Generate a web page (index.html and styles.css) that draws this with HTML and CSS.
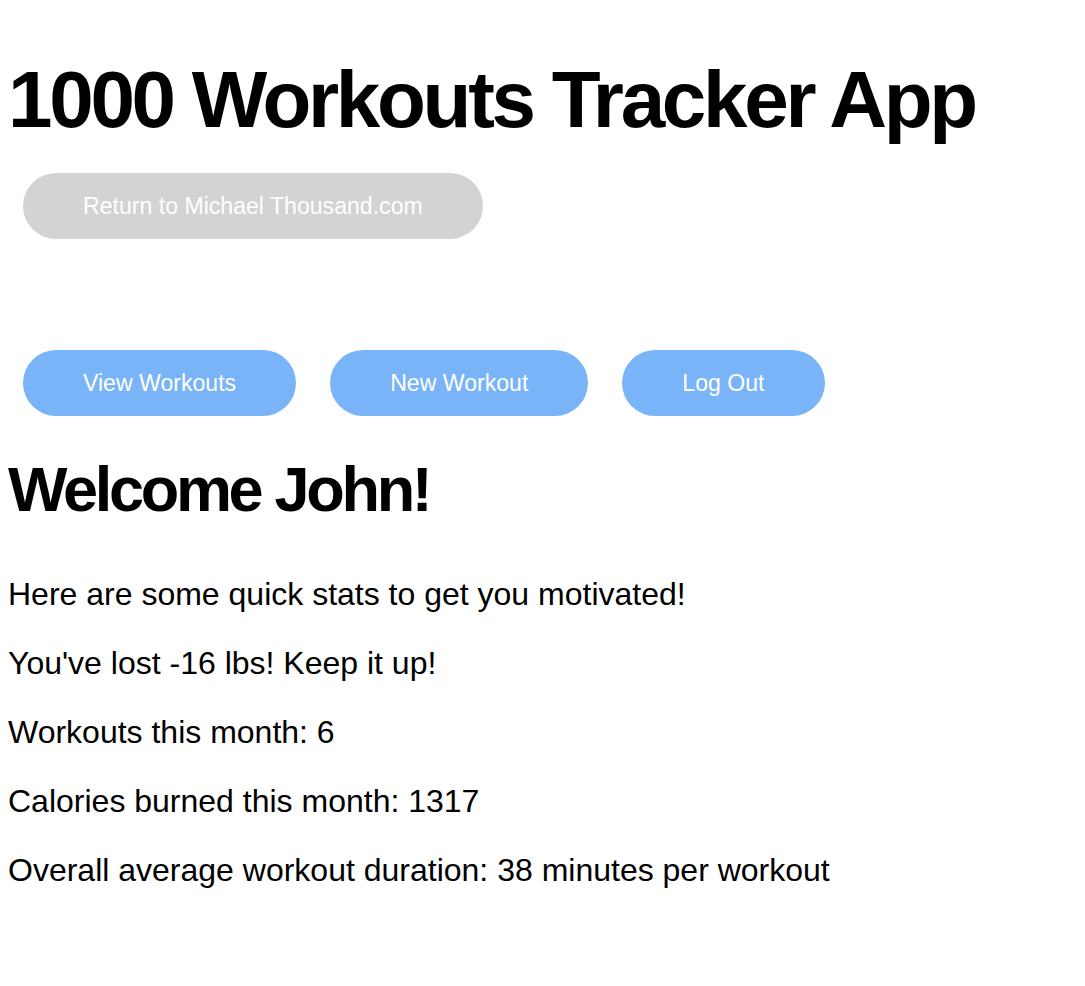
FILE: index.html
```html
<!DOCTYPE html>
<html>
<head>
<meta charset="utf-8">
<title>1000 Workouts Tracker App</title>
<link rel="stylesheet" href="styles.css">
</head>
<body>
<header class="header">
  <h1 class="title">1000 Workouts Tracker App</h1>
  <div class="return-row">
    <a class="btn btn-gray" href="#">Return to Michael Thousand.com</a>
  </div>
</header>
<nav class="nav">
  <a class="btn btn-blue" href="#">View Workouts</a>
  <a class="btn btn-blue" href="#">New Workout</a>
  <a class="btn btn-blue" href="#">Log Out</a>
</nav>
<main class="content">
  <h2 class="welcome">Welcome John!</h2>
  <div class="stats">
    <p class="stat">Here are some quick stats to get you motivated!</p>
    <p class="stat">You've lost -16 lbs! Keep it up!</p>
    <p class="stat">Workouts this month: 6</p>
    <p class="stat">Calories burned this month: 1317</p>
    <p class="stat">Overall average workout duration: 38 minutes per workout</p>
  </div>
</main>
</body>
</html>
```
FILE: styles.css
```css
body {
  margin: 8px;
  background: #ffffff;
  color: #000000;
  font-family: "Liberation Sans", Arial, sans-serif;
}

.header {
  display: flex;
  flex-direction: column;
  align-items: flex-start;
}

.title {
  margin: 46px 0 0;
  font-family: "Liberation Sans", Arial, sans-serif;
  font-size: 80px;
  font-weight: bold;
  letter-spacing: -3.3px;
  line-height: normal;
  white-space: nowrap;
}

.return-row {
  margin: 27px 0 0 15px;
}

.btn {
  display: inline-block;
  padding: 20px 60px;
  border-radius: 40px;
  font-family: "Liberation Sans", Arial, sans-serif;
  font-size: 23.1px;
  line-height: 26px;
  color: #ffffff;
  text-decoration: none;
  white-space: nowrap;
}

.btn-gray {
  background: #d3d3d3;
}

.btn-blue {
  background: #79b4f9;
}

.nav {
  display: flex;
  gap: 34px;
  margin: 111px 0 0 15px;
}

.welcome {
  margin: 37px 0 0;
  font-family: "Liberation Sans", Arial, sans-serif;
  font-size: 63px;
  font-weight: bold;
  letter-spacing: -3.3px;
  line-height: normal;
}

.stats {
  margin-top: 51px;
  display: flex;
  flex-direction: column;
  gap: 32px;
}

.stat {
  margin: 0;
  font-size: 32px;
  line-height: normal;
}
```
